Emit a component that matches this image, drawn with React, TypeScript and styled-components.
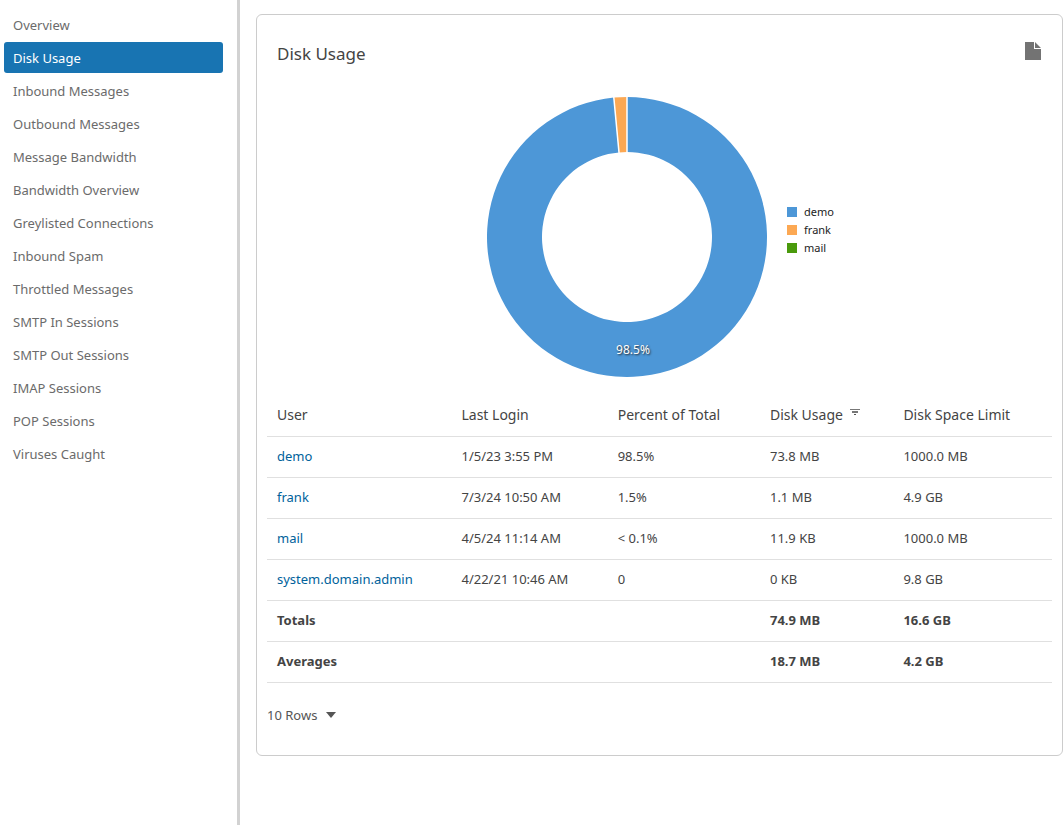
import React from "react";
import styled, { createGlobalStyle } from "styled-components";

const GlobalStyle = createGlobalStyle`
  * { box-sizing: border-box; }
  body {
    margin: 0;
    background: #fff;
    color: #444;
    font-family: "Noto Sans", "Open Sans", sans-serif;
    font-size: 13px;
    line-height: 20px;
  }
`;

const Page = styled.div`
  display: flex;
  min-height: 100vh;
`;

const Sidebar = styled.nav`
  display: flex;
  flex-direction: column;
  gap: 2px;
  flex: 0 0 240px;
  padding: 9px 14px 9px 4px;
  border-right: 3px solid #d2d2d2;
`;

const NavLink = styled.a<{ $active: boolean }>`
  padding: 6px 9px 5px;
  border-radius: 3px;
  color: ${(p) => (p.$active ? "#fff" : "#6b6b6b")};
  background: ${(p) => (p.$active ? "#1874b2" : "transparent")};
  text-decoration: none;
`;

const Main = styled.main`
  flex: 1;
  min-width: 0;
  padding: 14px 1px 14px 16px;
`;

const Card = styled.section`
  padding: 20px 10px 30px;
  border: 1px solid #ccc;
  border-radius: 6px;
`;

const CardHeader = styled.header`
  display: flex;
  justify-content: space-between;
  align-items: center;
  padding: 0 10px;
`;

const Title = styled.h1`
  margin: 0;
  font-size: 17px;
  line-height: 38px;
  font-weight: 400;
`;

const IconButton = styled.button`
  display: flex;
  padding: 0 0 6px;
  border: 0;
  background: none;
  color: #737373;
`;

const Chart = styled.div`
  display: flex;
  justify-content: center;
  align-items: center;
  gap: 20px;
  padding: 24px 0 17px 2px;
`;

const Donut = styled.svg`
  display: block;
  width: 280px;
  height: 280px;
`;

const SliceLabel = styled.text`
  fill: #fff;
  font-size: 12px;
  text-anchor: middle;
  text-shadow: 1px 1px 2px #222;
`;

const Legend = styled.ul`
  margin: 0 0 14px;
  padding: 0;
  list-style: none;
  color: #222;
  font-size: 11px;
  line-height: 18px;
`;

const LegendItem = styled.li<{ $color: string }>`
  display: flex;
  align-items: center;
  gap: 7px;
  &::before {
    content: "";
    width: 10px;
    height: 10px;
    background: ${(p) => p.$color};
  }
`;

const Table = styled.table`
  width: 100%;
  table-layout: fixed;
  border-collapse: collapse;
  text-align: left;
`;

const Col = styled.col<{ $share: number }>`
  width: ${(p) => p.$share}%;
`;

const HeadCell = styled.th`
  height: 42px;
  padding: 0 10px;
  border-bottom: 1px solid #e0e0e0;
  font-size: 14px;
  font-weight: 400;
  white-space: nowrap;
`;

const Cell = styled.td`
  height: 41px;
  padding: 0 10px 2px;
  border-bottom: 1px solid #e0e0e0;
`;

const SummaryRow = styled.tr`
  font-weight: 700;
`;

const UserLink = styled.a`
  color: #00629b;
  text-decoration: none;
`;

const SortIcon = styled.svg`
  margin-left: 7px;
  vertical-align: 5px;
`;

const RowsPicker = styled.label`
  display: inline-flex;
  align-items: center;
  gap: 8px;
  margin-top: 22px;
  color: #555;
`;

const RowsSelect = styled.select`
  appearance: none;
  padding: 0;
  border: 0;
  background: none;
  color: inherit;
  font: inherit;
`;

const sections = [
  "Overview", "Disk Usage", "Inbound Messages", "Outbound Messages",
  "Message Bandwidth", "Bandwidth Overview", "Greylisted Connections",
  "Inbound Spam", "Throttled Messages", "SMTP In Sessions",
  "SMTP Out Sessions", "IMAP Sessions", "POP Sessions", "Viruses Caught",
];

const slices = [
  { name: "demo", value: 98.5, color: "#4d97d7" },
  { name: "frank", value: 1.5, color: "#fca853" },
  { name: "mail", value: 0, color: "#4a9a0c" },
];

const shares = [23.5, 19.9, 19.4, 17, 20.2];

const users = [
  ["demo", "1/5/23 3:55 PM", "98.5%", "73.8 MB", "1000.0 MB"],
  ["frank", "7/3/24 10:50 AM", "1.5%", "1.1 MB", "4.9 GB"],
  ["mail", "4/5/24 11:14 AM", "< 0.1%", "11.9 KB", "1000.0 MB"],
  ["system.domain.admin", "4/22/21 10:46 AM", "0", "0 KB", "9.8 GB"],
];

const summaries = [
  ["Totals", "", "", "74.9 MB", "16.6 GB"],
  ["Averages", "", "", "18.7 MB", "4.2 GB"],
];

const point = (share: number, r: number) => {
  const a = (share / 100) * 2 * Math.PI;
  return `${140 + r * Math.sin(a)} ${140 - r * Math.cos(a)}`;
};

function ring(from: number, to: number) {
  const large = to - from > 50 ? 1 : 0;
  return `M${point(from, 140)}A140 140 0 ${large} 1 ${point(to, 140)}L${point(to, 85)}A85 85 0 ${large} 0 ${point(from, 85)}Z`;
}

export default function App() {
  return (
    <Page>
      <GlobalStyle />
      <Sidebar aria-label="Reports">
        {sections.map((s) => (
          <NavLink key={s} href="#" $active={s === "Disk Usage"}>{s}</NavLink>
        ))}
      </Sidebar>
      <Main>
        <Card>
          <CardHeader>
            <Title>Disk Usage</Title>
            <IconButton aria-label="Export report">
              <svg width="18" height="18" viewBox="0 0 18 18" fill="currentColor">
                <path d="M1 0h9v7h7v11H1zM11 0l6 6h-6z" />
              </svg>
            </IconButton>
          </CardHeader>
          <Chart>
            <Donut viewBox="0 0 280 280" role="img" aria-label="Disk usage by user">
              <path d={ring(0, 98.5)} fill={slices[0].color} />
              <path d={ring(98.5, 100)} fill={slices[1].color} />
              <path
                d={`M${point(0, 141)}L${point(0, 84)}M${point(98.5, 141)}L${point(98.5, 84)}`}
                stroke="#fff"
                strokeWidth="1.5"
              />
              <SliceLabel x="146" y="257">98.5%</SliceLabel>
            </Donut>
            <Legend>
              {slices.map((s) => (
                <LegendItem key={s.name} $color={s.color}>{s.name}</LegendItem>
              ))}
            </Legend>
          </Chart>
          <Table>
            <colgroup>
              {shares.map((s, i) => <Col key={i} $share={s} />)}
            </colgroup>
            <thead>
              <tr>
                <HeadCell>User</HeadCell>
                <HeadCell>Last Login</HeadCell>
                <HeadCell>Percent of Total</HeadCell>
                <HeadCell>
                  Disk Usage
                  <SortIcon width="10" height="6" viewBox="0 0 10 6" fill="#555">
                    <path d="M0 0h10v1H0zM2 2h6v2H2z" fillOpacity=".8" />
                    <path d="M4 5h2v1H4z" />
                  </SortIcon>
                </HeadCell>
                <HeadCell>Disk Space Limit</HeadCell>
              </tr>
            </thead>
            <tbody>
              {users.map(([user, ...rest]) => (
                <tr key={user}>
                  <Cell><UserLink href="#">{user}</UserLink></Cell>
                  {rest.map((v, i) => <Cell key={i}>{v}</Cell>)}
                </tr>
              ))}
            </tbody>
            <tfoot>
              {summaries.map((row) => (
                <SummaryRow key={row[0]}>
                  {row.map((v, i) => <Cell key={i}>{v}</Cell>)}
                </SummaryRow>
              ))}
            </tfoot>
          </Table>
          <RowsPicker>
            <RowsSelect aria-label="Rows per page" defaultValue="10">
              <option value="10">10 Rows</option>
            </RowsSelect>
            <svg width="10" height="6" viewBox="0 0 10 6" fill="#555">
              <path d="M0 0h10L5 6z" />
            </svg>
          </RowsPicker>
        </Card>
      </Main>
    </Page>
  );
}
